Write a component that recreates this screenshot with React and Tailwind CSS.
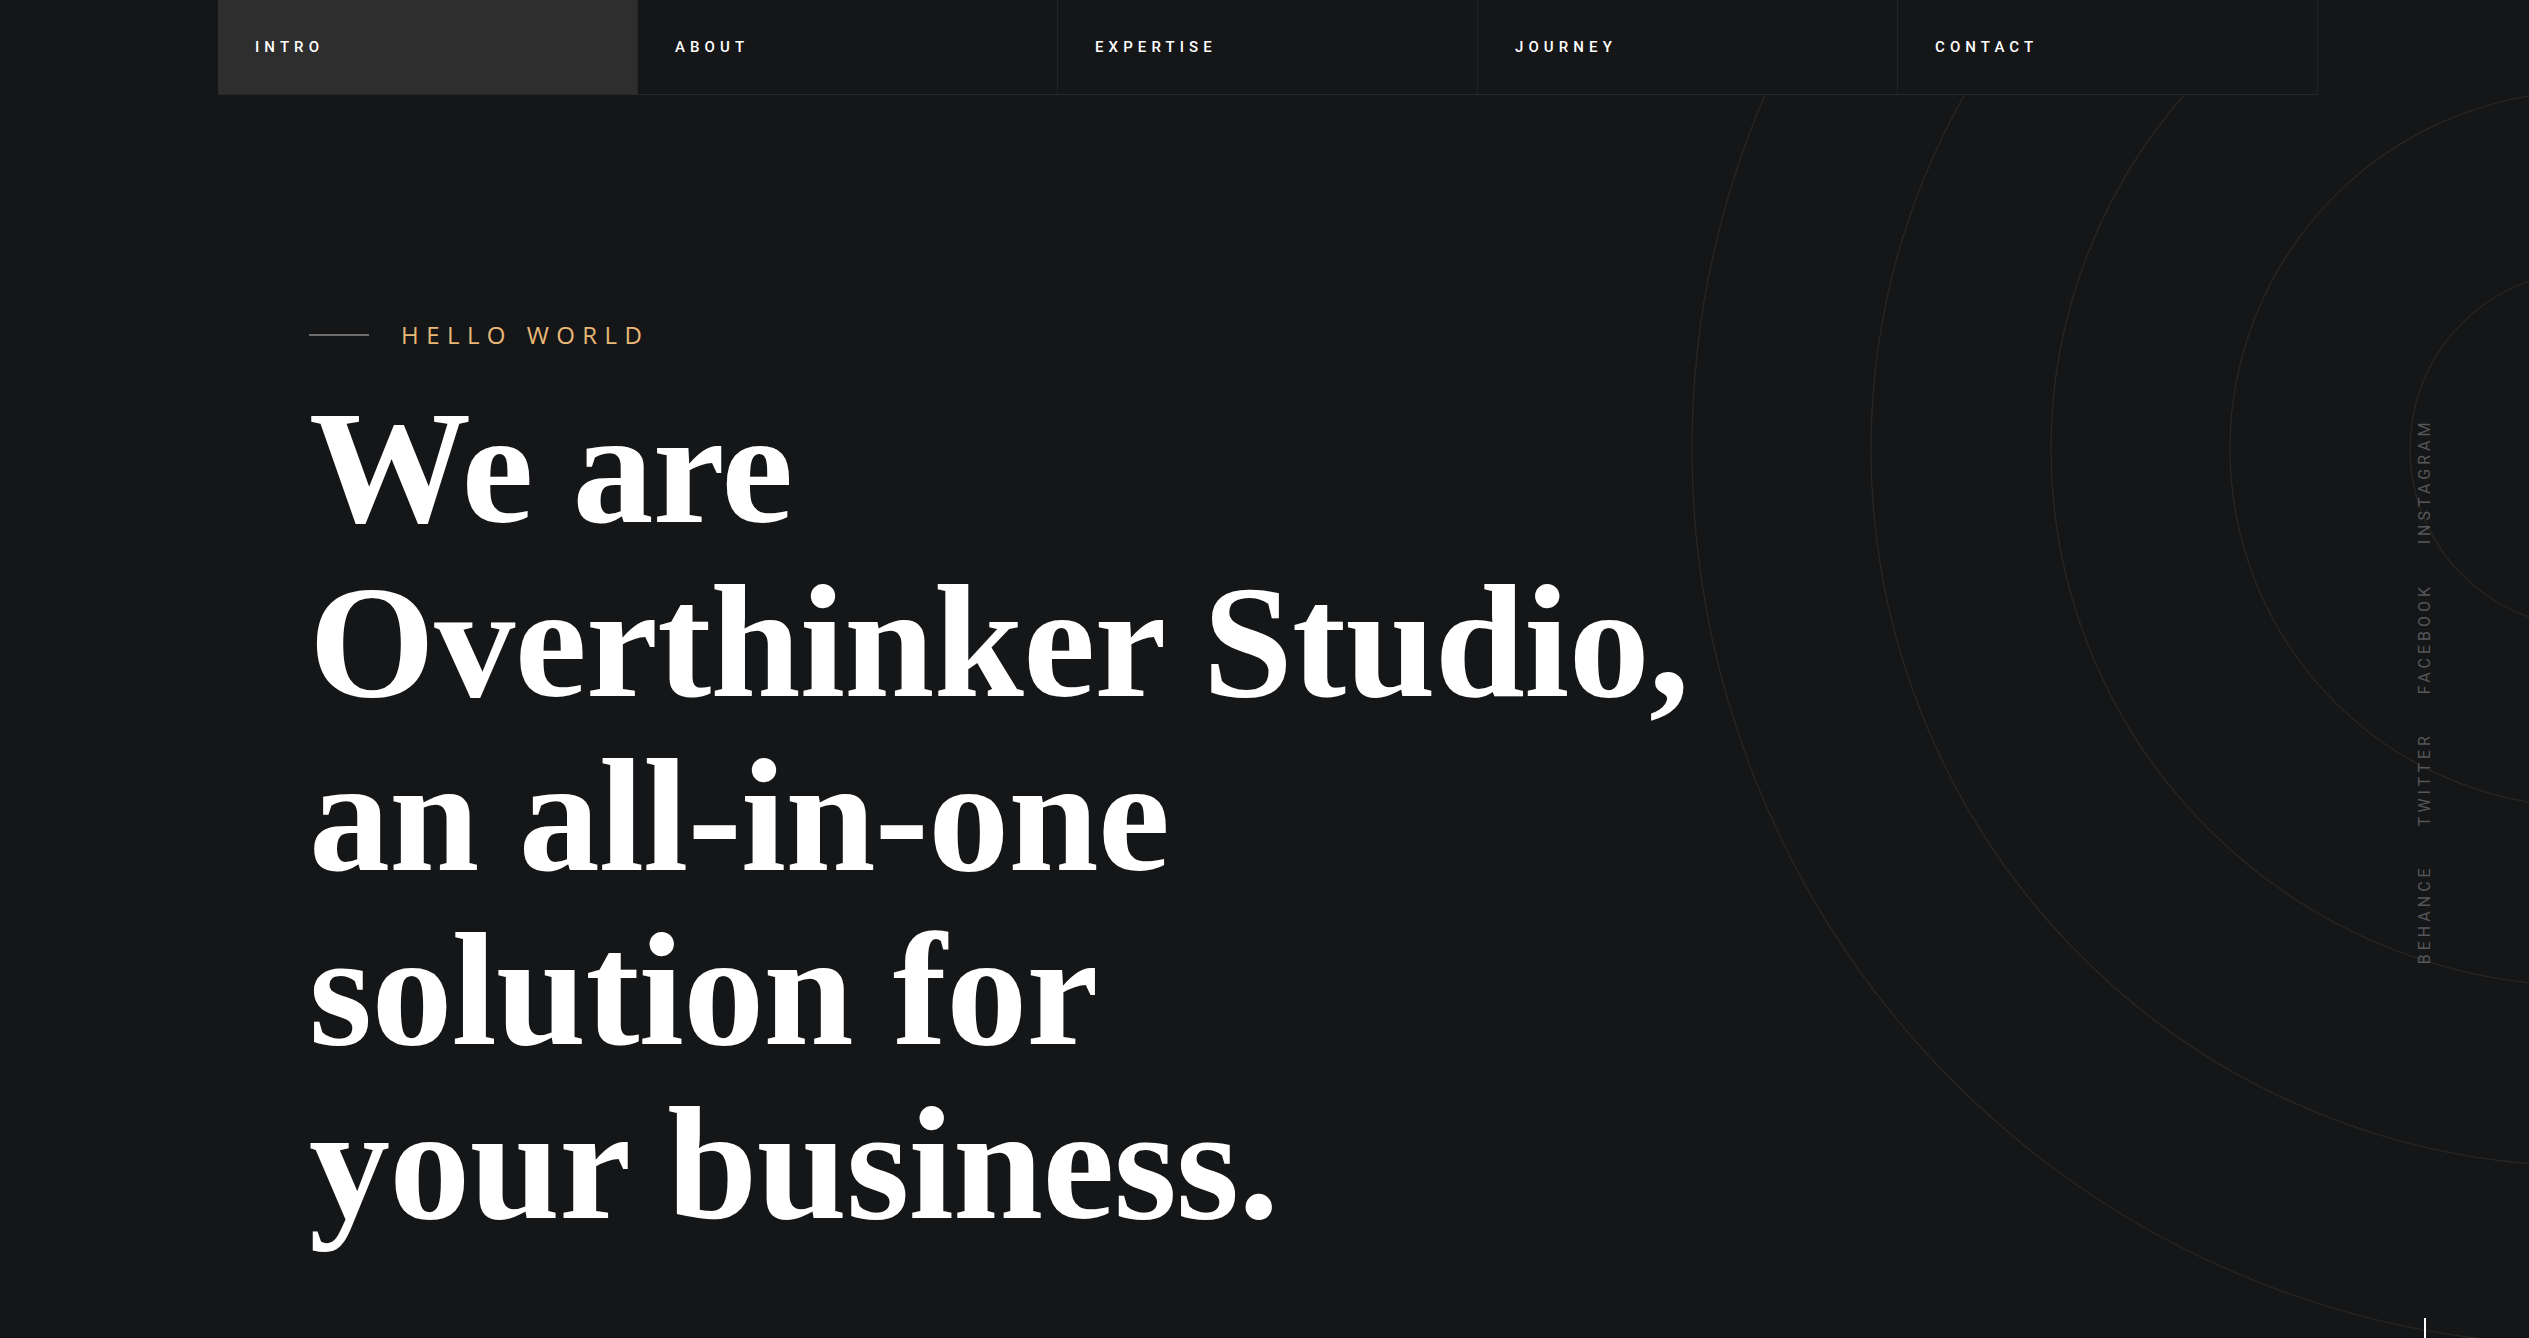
import React from "react";

const navItems = ["INTRO", "ABOUT", "EXPERTISE", "JOURNEY", "CONTACT"];
const socials = ["BEHANCE", "TWITTER", "FACEBOOK", "INSTAGRAM"];
const radii = [178, 358, 537, 717, 896];

function Rings() {
  return (
    <svg
      className="absolute inset-0 pointer-events-none"
      width="2529"
      height="1338"
      viewBox="0 0 2529 1338"
      fill="none"
    >
      {radii.map((r) => (
        <circle key={r} cx="2588" cy="449" r={r} stroke="#2a2722" strokeWidth="1.3" />
      ))}
    </svg>
  );
}

export default function App() {
  return (
    <div className="relative w-full h-[1338px] overflow-hidden bg-[#151618] text-white">
      <Rings />

      <nav className="relative z-10 ml-[218px] w-[2100px] h-[95px] grid grid-cols-5 border-b border-[#26272a] bg-[#151618]">
        {navItems.map((item, i) => (
          <div
            key={item}
            className={
              i === 0
                ? "flex items-center pl-[37px] bg-[#2e2e2e] border-r border-[#26272a]"
                : "flex items-center pl-[37px] border-r border-[#222326]"
            }
          >
            <span className="font-['Roboto',sans-serif] font-medium text-[15px] tracking-[0.34em] text-white">
              {item}
            </span>
          </div>
        ))}
      </nav>

      <main className="relative z-10 pl-[309px] pt-[222px]">
        <div className="flex items-center gap-[32px] h-[36px]">
          <span className="block w-[60px] h-[2px] bg-[#6d6d6d]"></span>
          <span className="font-['Open_Sans',sans-serif] text-[24px] tracking-[0.31em] text-[#e7b876]">
            HELLO WORLD
          </span>
        </div>
        <h1 className="mt-[28px] font-['Liberation_Serif',serif] font-bold text-[162px] leading-[174px] tracking-[-0.004em] text-white">
          We are
          <br />
          Overthinker Studio,
          <br />
          an all-in-one
          <br />
          solution for
          <br />
          your business.
        </h1>
      </main>

      <div className="absolute z-10 left-[2413px] top-[419px] flex gap-[38px] [writing-mode:vertical-rl] rotate-180">
        {socials.map((s) => (
          <span
            key={s}
            className="font-['Roboto',sans-serif] text-[16px] tracking-[0.25em] text-[#56575a]"
          >
            {s}
          </span>
        ))}
      </div>

      <div className="absolute z-10 left-[2424px] top-[1318px] w-[2px] h-[40px] bg-white"></div>
    </div>
  );
}
